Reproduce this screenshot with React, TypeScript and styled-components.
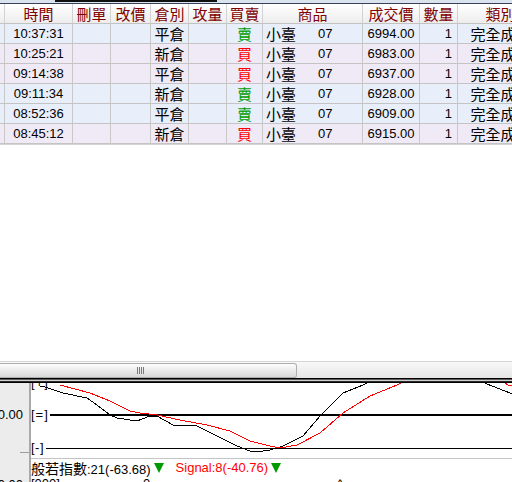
import React from 'react';
import styled, { createGlobalStyle } from 'styled-components';

type Side = '買' | '賣';

interface Trade {
  time: string;
  pos: string;
  side: Side;
  price: string;
}

const trades: Trade[] = [
  { time: '10:37:31', pos: '平倉', side: '賣', price: '6994.00' },
  { time: '10:25:21', pos: '新倉', side: '買', price: '6983.00' },
  { time: '09:14:38', pos: '平倉', side: '買', price: '6937.00' },
  { time: '09:11:34', pos: '新倉', side: '賣', price: '6928.00' },
  { time: '08:52:36', pos: '平倉', side: '賣', price: '6909.00' },
  { time: '08:45:12', pos: '新倉', side: '買', price: '6915.00' },
];

const headers = ['', '時間', '刪單', '改價', '倉別', '攻量', '買賣', '商品', '成交價', '數量', '類別'];

const COLS = '5px 68px 38px 40px 38px 38px 36px 100px 57px 38px 86px';

// chart data, in page coordinates
const blackLine = [
  [40, 386], [45, 387], [63, 393], [87, 398], [97, 405], [110, 415], [117, 418], [137, 421],
  [150, 416], [157, 416], [173, 425], [197, 426], [217, 436], [237, 446], [250, 451],
  [263, 451], [270, 450], [283, 446], [303, 436], [320, 416], [343, 393], [363, 385],
  [372, 380],
];
const blackTail = [[478, 378], [487, 384], [510, 393], [514, 394]];
const redLine = [
  [60, 385], [90, 393], [110, 401], [130, 411], [140, 413], [157, 415], [180, 420],
  [207, 425], [230, 431], [250, 441], [270, 446], [280, 448], [297, 445], [320, 433],
  [343, 413], [370, 396], [397, 385], [406, 380],
];
const redTail = [[500, 380], [508, 385], [514, 386]];

const toPoints = (pts: number[][]) => pts.map((p) => p.join(',')).join(' ');

const GlobalStyle = createGlobalStyle`
  body {
    margin: 0;
    background: #ffffff;
    overflow: hidden;
    font-family: 'Liberation Sans', 'Noto Sans CJK TC', sans-serif;
  }
`;

const Page = styled.div`
  width: 512px;
  height: 482px;
  display: flex;
  flex-direction: column;
  overflow: hidden;
  background: #ffffff;
`;

const TopStrip = styled.div`
  height: 3px;
  flex-shrink: 0;
  background: #dae2ee;
`;

const TopBar = styled.div`
  margin-left: 55px;
  width: 162px;
  height: 2px;
  background: #101010;
`;

const Table = styled.div`
  flex-shrink: 0;
  width: 512px;
  overflow: hidden;
  border-top: 1px solid #37425a;
  border-bottom: 1px solid #d4d4d4;
`;

const Row = styled.div<{ $bg?: string }>`
  display: grid;
  grid-template-columns: ${COLS};
  width: 544px;
  background: ${({ $bg }) => $bg || 'transparent'};
`;

const HeaderCell = styled.div`
  box-sizing: border-box;
  height: 20px;
  display: flex;
  align-items: center;
  justify-content: center;
  background: linear-gradient(#ffffff, #ededed);
  border-right: 1px solid #d2d2d2;
  border-bottom: 1px solid #c2c2c2;
  color: #800000;
  font-family: 'Noto Sans CJK TC', sans-serif;
  font-size: 15px;
  line-height: 19px;
  white-space: nowrap;
`;

const Cell = styled.div<{ $align?: 'left' | 'center' | 'right' }>`
  box-sizing: border-box;
  height: 20px;
  display: flex;
  align-items: center;
  justify-content: ${({ $align }) =>
    $align === 'left' ? 'flex-start' : $align === 'right' ? 'flex-end' : 'center'};
  padding: 0 ${({ $align }) => ($align === 'right' ? '5px' : $align === 'left' ? '3px' : '0')};
  border-right: 1px solid #c8c8c8;
  border-bottom: 1px solid #c4c4c4;
  color: #000000;
  font-family: 'Liberation Sans', sans-serif;
  font-size: 13px;
  line-height: 19px;
  white-space: nowrap;
`;

const Han = styled.span<{ $color?: string }>`
  font-family: 'Noto Sans CJK TC', sans-serif;
  font-size: 15px;
  color: ${({ $color }) => $color || '#000000'};
`;

const Code = styled.span`
  margin-left: 22px;
`;

const Filler = styled.div`
  flex: 1;
`;

const ScrollTrack = styled.div`
  height: 17px;
  flex-shrink: 0;
  box-sizing: border-box;
  border-top: 1px solid #d6d6d6;
  background: linear-gradient(#f8f8f8, #e6e6e6);
  display: flex;
  align-items: center;
`;

const Thumb = styled.div`
  box-sizing: border-box;
  width: 297px;
  height: 15px;
  border: 1px solid #aeaeae;
  border-left: none;
  border-radius: 0 3px 3px 0;
  background: linear-gradient(#fdfdfd, #d9d9d9);
  display: flex;
  align-items: center;
  padding-left: 137px;
`;

const Grip = styled.div`
  width: 7px;
  height: 7px;
  background: repeating-linear-gradient(90deg, #7a7a7a 0 1px, transparent 1px 2px);
`;

const Splitter = styled.div`
  height: 5px;
  flex-shrink: 0;
  background: linear-gradient(
    #000000 0 1px,
    #5a5a5a 1px 2px,
    #cfcfcf 2px 3px,
    #2a2a2a 3px 4px,
    #000000 4px 5px
  );
`;

const Chart = styled.div`
  height: 99px;
  flex-shrink: 0;
  display: flex;
`;

const AxisPanel = styled.div`
  position: relative;
  box-sizing: border-box;
  width: 31px;
  flex-shrink: 0;
  background: #ececec;
  border-right: 2px solid #a9a9a9;
  overflow: hidden;
`;

const AxisLabel = styled.span<{ $top: number }>`
  position: absolute;
  right: 6px;
  top: ${({ $top }) => $top}px;
  font-size: 13px;
  line-height: 16px;
  color: #000000;
`;

const Tick = styled.div<{ $top: number }>`
  position: absolute;
  left: 20px;
  top: ${({ $top }) => $top}px;
  width: 9px;
  height: 1px;
  background: #9c9c9c;
`;

const PlotColumn = styled.div`
  flex: 1;
  display: flex;
  flex-direction: column;
  min-width: 0;
`;

const Plot = styled.div`
  height: 75px;
  border-bottom: 1px solid #c4c4c4;
  svg {
    display: block;
  }
`;

const Legend = styled.div`
  height: 17px;
  display: flex;
  align-items: center;
  font-size: 13px;
  white-space: nowrap;
`;

const LegendText = styled.span<{ $color?: string }>`
  color: ${({ $color }) => $color || '#000000'};
  font-family: 'Liberation Sans', sans-serif;
`;

const LegendHan = styled.span`
  font-family: 'Noto Sans CJK TC', sans-serif;
  font-size: 14px;
`;

const DownArrow = styled.span`
  width: 0;
  height: 0;
  margin: 1px 12px 0 3px;
  border-left: 5px solid transparent;
  border-right: 5px solid transparent;
  border-top: 10px solid #009a00;
`;

const BottomRow = styled.div`
  flex: 1;
  display: flex;
  font-size: 13px;
  line-height: 16px;
  overflow: hidden;
  white-space: nowrap;
`;

const BottomText = styled.span<{ $width: number }>`
  width: ${({ $width }) => $width}px;
  flex-shrink: 0;
`;

const App = () => (
  <Page>
    <GlobalStyle />
    <TopStrip>
      <TopBar />
    </TopStrip>
    <Table>
      <Row>
        {headers.map((h, i) => (
          <HeaderCell key={i}>{h}</HeaderCell>
        ))}
      </Row>
      {trades.map((t) => (
        <Row key={t.time} $bg={t.side === '賣' ? '#e8eefa' : '#f0eaf6'}>
          <Cell />
          <Cell>{t.time}</Cell>
          <Cell />
          <Cell />
          <Cell>
            <Han>{t.pos}</Han>
          </Cell>
          <Cell />
          <Cell>
            <Han $color={t.side === '賣' ? '#009c00' : '#ff0000'}>{t.side}</Han>
          </Cell>
          <Cell $align="left">
            <Han>小臺</Han>
            <Code>07</Code>
          </Cell>
          <Cell>{t.price}</Cell>
          <Cell $align="right">1</Cell>
          <Cell>
            <Han>完全成交</Han>
          </Cell>
        </Row>
      ))}
    </Table>
    <Filler />
    <ScrollTrack>
      <Thumb>
        <Grip />
      </Thumb>
    </ScrollTrack>
    <Splitter />
    <Chart>
      <AxisPanel>
        <AxisLabel $top={24}>0.00</AxisLabel>
        <Tick $top={69} />
        <AxisLabel $top={94}>0.00</AxisLabel>
      </AxisPanel>
      <PlotColumn>
        <Plot>
          <svg width="481" height="75" viewBox="31 383 481 75" shapeRendering="crispEdges">
            <line x1="50" y1="415" x2="512" y2="415" stroke="#000" strokeWidth="2" />
            <line x1="46" y1="448.5" x2="512" y2="448.5" stroke="#000" strokeWidth="1" />
            <g fontFamily="'Liberation Sans', sans-serif" fontSize="13" fill="#000">
              <text x="31" y="387" letterSpacing="1">[+]</text>
              <text x="31" y="419" letterSpacing="1">[=]</text>
              <text x="31" y="452" letterSpacing="0.5">[-]</text>
            </g>
            <polyline points={toPoints(blackLine)} fill="none" stroke="#000" strokeWidth="1" />
            <polyline points={toPoints(blackTail)} fill="none" stroke="#000" strokeWidth="1" />
            <polyline points={toPoints(redLine)} fill="none" stroke="#ff0000" strokeWidth="1" />
            <polyline points={toPoints(redTail)} fill="none" stroke="#ff0000" strokeWidth="1" />
          </svg>
        </Plot>
        <Legend>
          <LegendText>
            <LegendHan>般若指數</LegendHan>:21(-63.68)
          </LegendText>
          <DownArrow />
          <LegendText $color="#ff0000">Signal:8(-40.76)</LegendText>
          <DownArrow />
        </Legend>
        <BottomRow>
          <BottomText $width={112}>[000]</BottomText>
          <BottomText $width={194}>0</BottomText>
          <BottomText $width={20}>^</BottomText>
        </BottomRow>
      </PlotColumn>
    </Chart>
  </Page>
);

export default App;
